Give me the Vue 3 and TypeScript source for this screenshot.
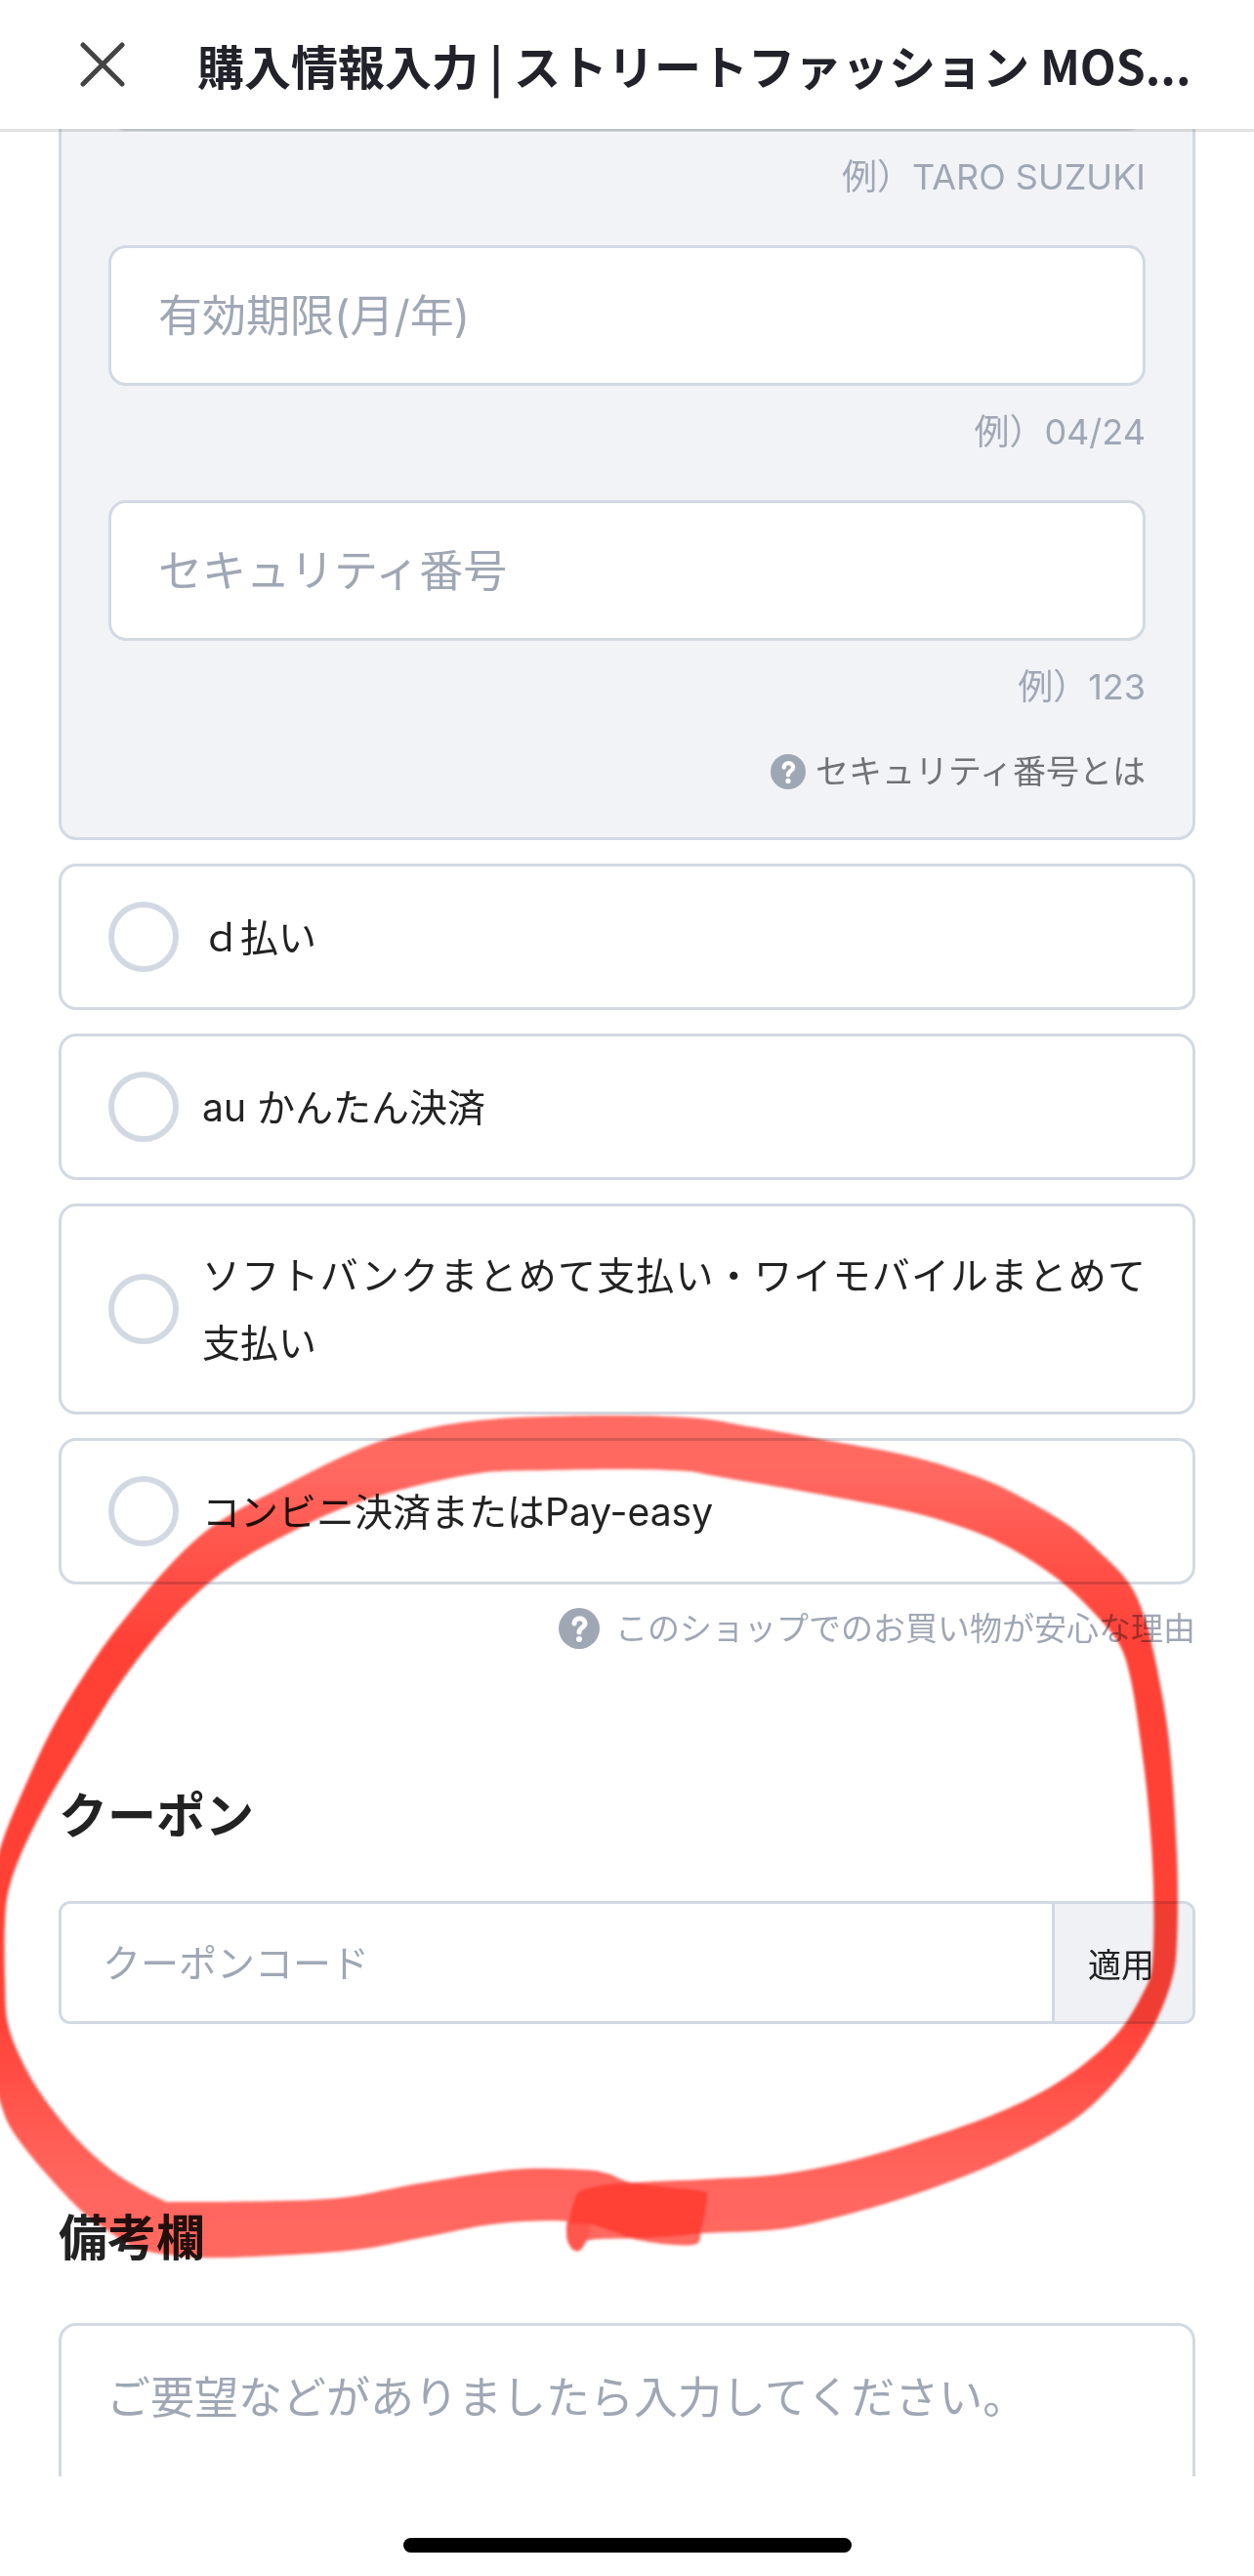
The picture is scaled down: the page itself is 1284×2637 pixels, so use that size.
<script setup lang="ts">
import { ref } from 'vue'

type Point = [number, number]

interface PaymentMethod {
  id: string
  label: string
}

const methods: PaymentMethod[] = [
  { id: 'd-barai', label: 'ｄ払い' },
  { id: 'au', label: 'au かんたん決済' },
  { id: 'carrier', label: 'ソフトバンクまとめて支払い・ワイモバイルまとめて支払い' },
  { id: 'convenience', label: 'コンビニ決済またはPay-easy' },
]

const cardName = ref('')
const expiry = ref('')
const securityCode = ref('')
const method = ref('')
const coupon = ref('')
const note = ref('')

// Turns a list of points into a smooth closed curve (Catmull-Rom to Bezier).
function smooth(points: Point[]): string {
  const n = points.length
  let d = `M${points[0][0]} ${points[0][1]}`
  for (let i = 0; i < n; i++) {
    const p0 = points[(i - 1 + n) % n]
    const p1 = points[i]
    const p2 = points[(i + 1) % n]
    const p3 = points[(i + 2) % n]
    const c1 = [p1[0] + (p2[0] - p0[0]) / 6, p1[1] + (p2[1] - p0[1]) / 6]
    const c2 = [p2[0] - (p3[0] - p1[0]) / 6, p2[1] - (p3[1] - p1[1]) / 6]
    d += `C${c1[0]} ${c1[1]} ${c2[0]} ${c2[1]} ${p2[0]} ${p2[1]}`
  }
  return d + 'Z'
}

const outer: Point[] = [
  [604, 2293], [660, 2291], [720, 2286], [798, 2282], [871, 2266], [949, 2242], [1031, 2209],
  [1101, 2169], [1146, 2126], [1178, 2080], [1199, 2030], [1205, 1987], [1205, 1900], [1197, 1783],
  [1183, 1700], [1170, 1650], [1154, 1618], [1125, 1588], [1092, 1560], [1035, 1527], [990, 1508],
  [929, 1490], [839, 1473], [765, 1460], [716, 1452], [642, 1449], [560, 1450], [491, 1454],
  [430, 1464], [369, 1483], [287, 1523], [221, 1560], [176, 1600], [135, 1648], [98, 1697],
  [57, 1763], [25, 1830], [0, 1893], [-14, 1960], [-16, 2050], [-12, 2110], [0, 2151],
  [12, 2180], [41, 2218], [82, 2262], [111, 2284], [139, 2301], [172, 2308], [229, 2311],
  [356, 2304], [430, 2291], [512, 2276], [594, 2275], [653, 2293], [709, 2298], [718, 2283],
  [724, 2250], [719, 2243],
]

const inner: Point[] = [
  [650, 2235], [622, 2225], [594, 2221], [524, 2221], [430, 2235], [356, 2249], [287, 2253],
  [184, 2254], [164, 2251], [123, 2228], [90, 2201], [61, 2169], [31, 2126], [9, 2076],
  [5, 2030], [5, 1966], [10, 1930], [25, 1890], [49, 1843], [82, 1788], [123, 1723],
  [164, 1670], [205, 1628], [246, 1597], [295, 1570], [348, 1545], [410, 1525], [491, 1508],
  [560, 1505], [642, 1504], [703, 1506], [732, 1511], [830, 1528], [929, 1547], [990, 1565],
  [1035, 1585], [1084, 1617], [1121, 1652], [1146, 1683], [1158, 1720], [1168, 1783],
  [1176, 1851], [1181, 1930], [1180, 2009], [1170, 2041], [1142, 2084], [1092, 2126],
  [1031, 2159], [949, 2189], [871, 2212], [798, 2226], [720, 2231], [673, 2233], [623, 2236],
  [596, 2240], [588, 2250], [582, 2282], [584, 2300], [593, 2304],
]

const markerLoop = smooth([...outer, ...inner])
const markerOverlap = smooth([
  [596, 2242], [623, 2236], [650, 2235], [685, 2239], [719, 2243], [724, 2250], [718, 2283],
  [712, 2287], [653, 2291], [630, 2285], [605, 2277], [592, 2276], [583, 2274], [589, 2250],
])
const markerTip = smooth([
  [583, 2272], [603, 2275], [602, 2290], [593, 2304], [583, 2298], [580, 2286],
])
</script>

<template>
  <div class="screen">
    <header class="bar">
      <button class="close" type="button" aria-label="閉じる">
        <svg viewBox="0 0 46 46" aria-hidden="true"><path d="M3 3L43 43M43 3L3 43" /></svg>
      </button>
      <h1 class="title">購入情報入力 | ストリートファッション MOS...</h1>
    </header>

    <main class="scroll">
      <form class="form" @submit.prevent>
        <section class="card">
          <input v-model="cardName" class="field" type="text" aria-label="カード名義" />
          <p class="hint">例）TARO SUZUKI</p>
          <input v-model="expiry" class="field" type="text" placeholder="有効期限(月/年)" aria-label="有効期限(月/年)" />
          <p class="hint">例）04/24</p>
          <input v-model="securityCode" class="field" type="text" placeholder="セキュリティ番号" aria-label="セキュリティ番号" />
          <p class="hint last">例）123</p>
          <a class="help in-card" href="#security">
            <svg viewBox="0 0 42 42" aria-hidden="true">
              <circle cx="21" cy="21" r="21" />
              <path d="M16 16C16 9 27 9 27 16C27 20 21 20 21 25" />
              <circle class="dot" cx="21" cy="32" r="3" />
            </svg>
            <span>セキュリティ番号とは</span>
          </a>
        </section>

        <label v-for="item in methods" :key="item.id" class="option">
          <input v-model="method" type="radio" name="payment" :value="item.id" />
          <span>{{ item.label }}</span>
        </label>

        <a class="help" href="#safety">
          <svg viewBox="0 0 42 42" aria-hidden="true">
            <circle cx="21" cy="21" r="21" />
            <path d="M16 16C16 9 27 9 27 16C27 20 21 20 21 25" />
            <circle class="dot" cx="21" cy="32" r="3" />
          </svg>
          <span>このショップでのお買い物が安心な理由</span>
        </a>

        <h2 class="heading coupon-heading"><label for="coupon">クーポン</label></h2>
        <div class="coupon">
          <input id="coupon" v-model="coupon" type="text" placeholder="クーポンコード" />
          <button type="button">適用</button>
        </div>

        <h2 class="heading note-heading"><label for="note">備考欄</label></h2>
        <textarea id="note" v-model="note" class="note" placeholder="ご要望などがありましたら入力してください。"></textarea>
      </form>
    </main>

    <footer class="home"><span class="home-bar"></span></footer>

    <svg class="marker" viewBox="0 0 1284 2637" preserveAspectRatio="none" aria-hidden="true">
      <defs>
        <linearGradient id="ink" gradientUnits="userSpaceOnUse" x1="0" y1="1450" x2="0" y2="2300">
          <stop offset="0" stop-color="#ff6a62" />
          <stop offset="0.07" stop-color="#ff6860" />
          <stop offset="0.16" stop-color="#ff544b" />
          <stop offset="0.28" stop-color="#ff4036" />
          <stop offset="0.72" stop-color="#ff4036" />
          <stop offset="0.83" stop-color="#ff554c" />
          <stop offset="0.92" stop-color="#ff655d" />
          <stop offset="1" stop-color="#ff675f" />
        </linearGradient>
        <filter id="soft" x="-5%" y="-5%" width="110%" height="110%">
          <feGaussianBlur stdDeviation="1.5" />
        </filter>
      </defs>
      <g filter="url(#soft)">
        <path :d="markerLoop" fill="url(#ink)" />
        <path :d="markerTip" fill="#ff564d" />
        <path :d="markerOverlap" fill="#ff4036" />
      </g>
    </svg>
  </div>
</template>

<style>
body {
  margin: 0;
  background: #fff;
}
</style>

<style scoped>
* {
  box-sizing: border-box;
}

.screen {
  position: relative;
  isolation: isolate;
  display: flex;
  flex-direction: column;
  height: 100vh;
  overflow: hidden;
  background: #fff;
  color: #222;
  font-family: Inter, "Noto Sans CJK JP", sans-serif;
}

.bar {
  position: relative;
  z-index: 1;
  display: flex;
  flex: none;
  align-items: center;
  gap: 74px;
  height: 132px;
  padding: 0 60px 0 82px;
  background: #fff;
  box-shadow: 0 3px 0 rgba(0, 0, 0, 0.11);
}

.close {
  flex: none;
  width: 46px;
  height: 46px;
  padding: 0;
  border: 0;
  background: none;
}

.close svg {
  display: block;
  width: 46px;
  height: 46px;
  fill: none;
  stroke: #444;
  stroke-width: 5;
  stroke-linecap: round;
}

.title {
  flex: 1;
  margin: 0;
  color: #22222a;
  font-family: "Noto Sans CJK JP", sans-serif;
  font-size: 48px;
  font-weight: 700;
  line-height: 72px;
  white-space: nowrap;
}

.scroll {
  flex: 1;
  min-height: 0;
  overflow: hidden;
}

.form {
  display: flex;
  flex-direction: column;
  margin-top: -193px;
  padding: 0 60px;
}

.card {
  display: flex;
  flex-direction: column;
  margin-bottom: 24px;
  padding: 48px 48px 39px;
  border: 3px solid #d3d9e2;
  border-radius: 18px;
  background: #f1f3f7;
}

.field {
  width: 100%;
  height: 144px;
  padding: 0 48px;
  border: 3px solid #d3d9e2;
  border-radius: 18px;
  background: #fff;
  color: #222;
  font: inherit;
  font-size: 45px;
}

::placeholder {
  color: #a0a7b4;
  opacity: 1;
}

.hint {
  margin: 19px 0 41px;
  color: #a0a7b4;
  font-size: 36px;
  line-height: 57px;
  text-align: right;
}

.hint.last {
  margin-bottom: 29px;
}

.help {
  display: flex;
  align-items: center;
  align-self: flex-end;
  gap: 16px;
  height: 42px;
  color: #a0a7b4;
  font-size: 33px;
  line-height: 42px;
  text-decoration: none;
}

.help svg {
  width: 42px;
  height: 42px;
  fill: #a0a7b4;
}

.help path {
  fill: none;
  stroke: #fff;
  stroke-width: 5;
  stroke-linecap: round;
}

.help .dot {
  fill: #fff;
}

.help.in-card {
  gap: 10px;
  height: 57px;
  color: #6f7276;
  font-size: 34px;
}

.in-card svg {
  width: 36px;
  height: 36px;
}

.option {
  display: flex;
  align-items: center;
  gap: 24px;
  margin-bottom: 24px;
  padding: 36px 48px;
  border: 3px solid #d3d9e2;
  border-radius: 18px;
  font-size: 39px;
  line-height: 69px;
  text-align: justify;
}

.option input {
  flex: none;
  width: 72px;
  height: 72px;
  margin: 0;
  border: 6px solid #d3d9e2;
  border-radius: 50%;
  appearance: none;
  background: #fff;
}

.option input:checked {
  border-width: 22px;
}

.option span {
  flex: 1;
}

.heading {
  margin: 0 0 51px;
  font-size: 50px;
  font-weight: 700;
  line-height: 72px;
}

.coupon-heading {
  margin-top: 135px;
}

.note-heading {
  margin-top: 183px;
}

.coupon {
  display: flex;
  height: 126px;
  overflow: hidden;
  border: 3px solid #d3d9e2;
  border-radius: 12px;
}

.coupon input {
  flex: 1;
  min-width: 0;
  padding: 0 42px;
  border: 0;
  background: #fff;
  color: #222;
  font: inherit;
  font-size: 39px;
}

.coupon button {
  flex: none;
  padding: 0 39px 0 34px;
  border: 0;
  border-left: 3px solid #d3d9e2;
  background: #eff1f5;
  color: #222;
  font: inherit;
  font-size: 34px;
}

.note {
  display: block;
  width: 100%;
  height: 300px;
  padding: 44px 46px;
  border: 3px solid #d3d9e2;
  border-radius: 18px;
  background: #fff;
  color: #222;
  font: inherit;
  font-size: 45px;
  line-height: 60px;
  resize: none;
}

.home {
  display: flex;
  flex: none;
  justify-content: center;
  height: 102px;
  padding-top: 63px;
  background: #fff;
}

.home-bar {
  width: 459px;
  height: 15px;
  border-radius: 8px;
  background: #000;
}

.marker {
  position: absolute;
  z-index: 2;
  inset: 0;
  width: 100%;
  height: 100%;
  mix-blend-mode: multiply;
  pointer-events: none;
}
</style>
